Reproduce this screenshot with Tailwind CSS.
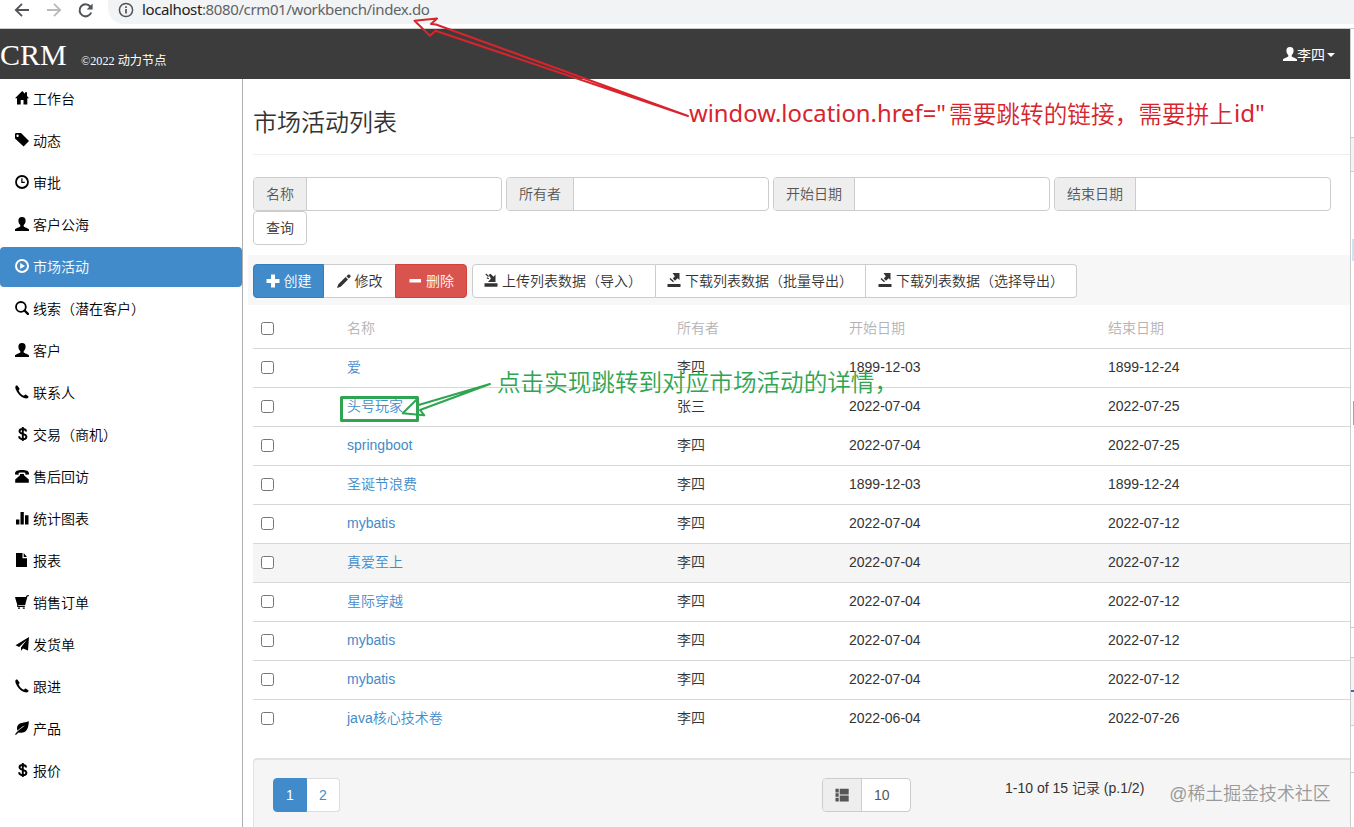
<!DOCTYPE html>
<html lang="zh-CN">
<head>
  <meta charset="UTF-8" />
  <meta name="viewport" content="width=device-width, initial-scale=1.0"/>
  <title>市场活动列表</title>
  <script src="https://cdn.jsdelivr.net/npm/@tailwindcss/browser@4"></script>
  <style>
    body {
      font-family: 'Liberation Sans', 'Noto Sans CJK SC', sans-serif;
    }
  </style>
</head>
<body class="relative w-[1354px] h-[827px] overflow-hidden bg-white text-sm text-[#333] flex flex-col">

  <!-- Icons -->
  <svg class="hidden">
    <symbol id="home" viewBox="0 0 14 14"><path d="M7.200 0 0 7.200h2V13.500h3.700V9h2.800v4.500H12.300V7.200h1.700L12 5V1.300H10v1.500z"/></symbol>
    <symbol id="tag" viewBox="0 0 14 14"><path fill-rule="evenodd" d="M0 .8.8 0H6l8 7.900L8.600 13.400 0 5.400zM2.600 1.500a1.200 1.200 0 1 0 0 2.400 1.200 1.200 0 0 0 0-2.400z"/></symbol>
    <symbol id="time" viewBox="0 0 14 14"><circle cx="7" cy="7" r="6" fill="none" stroke="currentColor" stroke-width="1.800"/><path d="M6.300 3.200h1.200v3.600H9.800V8H6.300z"/></symbol>
    <symbol id="user" viewBox="0 0 14 14"><path d="M7 0C4.400 0 3.300 1.500 3.400 4c.1 2 .9 3.100 1.900 4.100v1.400C4.800 10.300.3 11.200 0 12.600V14h14v-1.400c-.3-1.400-4.800-2.300-5.300-3.100V8.100c1-1 1.800-2.100 1.900-4.100C10.700 1.500 9.600 0 7 0z"/></symbol>
    <symbol id="play" viewBox="0 0 14 14"><circle cx="7" cy="7" r="6" fill="none" stroke="currentColor" stroke-width="2"/><path d="M5.200 3.900 10 7l-4.800 3.100z"/></symbol>
    <symbol id="search" viewBox="0 0 14 14"><circle cx="5.900" cy="5.900" r="4.900" fill="none" stroke="currentColor" stroke-width="1.800"/><path d="m9.500 9.500 3.400 3.400" stroke="currentColor" stroke-width="2.300" stroke-linecap="round"/></symbol>
    <symbol id="phone" viewBox="0 0 14 14"><path d="M1.300.6C.2 1.200 0 2.600.8 4.500 2.400 8.300 5.500 11.600 9 13.100c2 .8 3.500.6 4.300-.5l.3-1-2.800-2-1 .2-.8 1c-2.500-1.200-4.300-3-5.400-5.400l.8-.9.1-1L2.300.4z"/></symbol>
    <symbol id="usd" viewBox="0 0 14 14"><path fill="none" stroke="currentColor" stroke-width="1.900" d="M11.200 4.500C11 2.800 9.700 2 7.800 2 6 2 4.500 2.800 4.500 4.300c0 3.300 6.900 2 6.900 5.400 0 1.600-1.600 2.500-3.600 2.500-2.200 0-3.600-1-3.700-2.900M7.800 0v14"/></symbol>
    <symbol id="desk" viewBox="0 0 14 14"><path d="M0 4.800C0 1.900 2.600 1 7 1s7 .9 7 3.800V5.500l-3.600.3V3.900C9.400 3.400 4.600 3.400 3.600 3.900v1.900L0 5.500zM5 5h4v1.300l4.800 4.300V13.800H.2v-3.200L5 6.300z"/></symbol>
    <symbol id="stats" viewBox="0 0 14 14"><path d="M1 8.500h3.400v5H1zM5.500 1h3.300v12.500H5.500zM10 4.300h3.500v9.200H10z"/></symbol>
    <symbol id="file" viewBox="0 0 14 14"><path d="M1 0h6.500v5.200H12V14H1zM8.700 0 12 4H8.700z"/></symbol>
    <symbol id="cart" viewBox="0 0 14 14"><path d="M.2 2h10.700L11.700.3h2.300v1h-1.500l-2.400 8.900H3.200v.8h6.600v1H2.200V9.600L.2 3zM3 12.400h2v1.300H3zM7.800 12.400h2v1.300h-2z"/></symbol>
    <symbol id="send" viewBox="0 0 14 14"><path d="M14 0 .5 8.300l3.600 1.600L11.600 3 6 10.500v3.200l2-2.100 5 1.900z"/></symbol>
    <symbol id="leaf" viewBox="0 0 14 14"><path d="M13.900.2C9 2.200 4 .8 2.300 5.600c-.5 1.500-.3 2.700.1 3.900 2.300-1.500 4-3.600 7.500-4.900C7.500 6.800 4.500 8.300 2.300 10.600L0 13.300l.9.600 2.600-2.500c3 1 6.800.5 8.500-2.800C13.400 6 13.600 3 13.900.2z"/></symbol>
    <symbol id="plus" viewBox="0 0 14 14"><path d="M5 .5h4V5h4.500v4H9v4.500H5V9H.5V5H5z"/></symbol>
    <symbol id="minus" viewBox="0 0 14 14"><path d="M1.500 5h11.500v3.500H1.500z"/></symbol>
    <symbol id="pencil" viewBox="0 0 14 14"><path d="M0 14 1.300 10.300 8.600 3l2.400 2.400-7.300 7.300zM9.400 2.200 11.300.4h1l1.300 1.300v1l-1.800 1.900z"/></symbol>
    <symbol id="import" viewBox="0 0 14 14"><path d="M.5 10.300h13V13.800H.5zM4 9h7.500V1.500L9.600 3.700 6.400.8 4.600 2 7 5.600z"/><path d="m1.800 1 2.700 2.500M2.800 4.700l2 1" stroke="currentColor" stroke-width="1.200"/></symbol>
    <symbol id="export" viewBox="0 0 14 14"><path d="M.5 11h13v3H.5zM5.500 0h7V7L10.600 5.200 8 7.800 5.800 5.600 7.800 3.200z"/><path d="m3 5.500 3.500 3.200" stroke="currentColor" stroke-width="1.500"/></symbol>
    <symbol id="thlist" viewBox="0 0 14 14"><path d="M.5.800h3.200v3.600H.5zM4.700.8h9v5.700h-9zM.5 5.200h3.200v3.600H.5zM4.700 7.500h9v6h-9zM.5 9.700h3.200v3.800H.5z"/></symbol>
  </svg>

  <!-- Barra do navegador -->
  <div class="h-[28px] shrink-0 flex items-start bg-white font-['Noto_Sans']">
    <div class="w-[108px] h-[22px] flex items-center pl-[14px] text-[#5f6368]">
      <svg class="w-4 h-4 mr-4" viewBox="0 0 16 16" fill="none" stroke="#505357" stroke-width="1.8"><path d="M15 7H2M8 .8 1.800 7 8 13.200"/></svg>
      <svg class="w-4 h-4 mr-4" viewBox="0 0 16 16" fill="none" stroke="#b8babd" stroke-width="1.8"><path d="M1 7h13M8 .8 14.200 7 8 13.200"/></svg>
      <svg class="w-4 h-4" viewBox="0 0 16 16"><path d="M13.200 9.500A6 6 0 1 1 12.200 3.500" fill="none" stroke="#505357" stroke-width="2"/><path d="M14.600.5v6H8.700z" fill="#505357"/></svg>
    </div>
    <div class="flex-1 h-6 rounded-bl-2xl bg-[#f1f3f4] flex pl-[10px]">
      <svg class="w-4 h-4 mt-[2px] mr-[8px]" viewBox="0 0 16 16" fill="none" stroke="#505357" stroke-width="1.500"><circle cx="8" cy="8" r="6.600"/><path d="M8 7v4.500M8 4.200v1.700" stroke-width="1.700"/></svg>
      <div class="text-[15px] tracking-[-0.38px] leading-[19px] text-[#5f6368] whitespace-nowrap"><span class="text-[#202124]">localhost</span>:8080/crm01/workbench/index.do</div>
    </div>
  </div>

  <div class="flex-1 min-h-0 flex">
    <div class="w-[1350px] flex flex-col border-t border-[#ccc]">

      <!-- Topo -->
      <header class="h-[50px] shrink-0 bg-[#3c3c3c] text-white flex items-center justify-between pr-[15px]">
        <div class="flex items-baseline pt-[2px] font-['Liberation_Serif','Noto_Sans_CJK_SC',serif] whitespace-nowrap">
          <span class="text-[30px] leading-[50px] w-[81px]">CRM</span>
          <span class="text-[12.2px]">©2022 动力节点</span>
        </div>
        <div class="flex items-center pt-[2px]">
          <svg class="w-[14px] h-[14px] fill-current -mt-[3px]"><use href="#user"/></svg>
          <span>李四</span>
          <span class="ml-[2px] border-x-4 border-t-4 border-x-transparent border-t-white"></span>
        </div>
      </header>

      <div class="flex-1 min-h-0 flex">
        <!-- Menu lateral -->
        <nav id="menu" class="w-[243px] shrink-0 border-r border-[#b0b0b0] flex flex-col gap-[2px] text-black font-[350]"></nav>

        <main class="flex-1 min-w-0 pl-[5px] flex flex-col font-[350]">
          <div class="ml-[5px] h-[76px] border-b border-[#eee] pt-[31px]">
            <h3 class="text-2xl leading-[26px] font-[350]">市场活动列表</h3>
          </div>

          <!-- Filtros -->
          <form class="ml-[5px] mt-[22px] flex flex-wrap gap-x-1 text-[#555]">
            <label class="flex h-[34px] w-[249px] rounded border border-[#ccc] overflow-hidden leading-8"><span class="w-[53px] text-center bg-[#eee] border-r border-[#ccc]">名称</span></label>
            <label class="flex h-[34px] w-[263px] rounded border border-[#ccc] overflow-hidden leading-8"><span class="w-[67px] text-center bg-[#eee] border-r border-[#ccc]">所有者</span></label>
            <label class="flex h-[34px] w-[277px] rounded border border-[#ccc] overflow-hidden leading-8"><span class="w-[81px] text-center bg-[#eee] border-r border-[#ccc]">开始日期</span></label>
            <label class="flex h-[34px] w-[277px] rounded border border-[#ccc] overflow-hidden leading-8"><span class="w-[81px] text-center bg-[#eee] border-r border-[#ccc]">结束日期</span></label>
            <button type="button" class="h-[34px] w-[54px] rounded border border-[#ccc] text-[#333]">查询</button>
          </form>

          <!-- Botões -->
          <div class="mt-[10px] h-[50px] shrink-0 bg-[#f7f7f7] flex items-center pl-[5px] pt-[2px] whitespace-nowrap">
            <button class="h-[34px] w-[71px] rounded-l bg-[#428bca] border border-[#357ebd] text-white flex items-center justify-center gap-1"><svg class="w-[14px] h-[14px] fill-current"><use href="#plus"/></svg>创建</button>
            <button class="h-[34px] w-[71px] bg-white border-y border-[#ccc] flex items-center justify-center gap-1"><svg class="w-[14px] h-[14px] fill-current"><use href="#pencil"/></svg>修改</button>
            <button class="h-[34px] w-[72px] rounded-r bg-[#d9534f] border border-[#d43f3a] text-white flex items-center justify-center gap-1"><svg class="w-[14px] h-[14px] fill-current"><use href="#minus"/></svg>删除</button>
            <button class="ml-[5px] h-[34px] w-[184px] rounded-l bg-white border border-[#ccc] flex items-center pl-[11px] gap-1"><svg class="w-[14px] h-[14px] fill-current -mt-[2px]"><use href="#import"/></svg>上传列表数据（导入）</button>
            <button class="h-[34px] w-[210px] bg-white border-y border-r border-[#ccc] flex items-center pl-[11px] gap-1"><svg class="w-[14px] h-[14px] fill-current -mt-[2px]"><use href="#export"/></svg>下载列表数据（批量导出）</button>
            <button class="h-[34px] w-[211px] rounded-r bg-white border-y border-r border-[#ccc] flex items-center pl-3 gap-1"><svg class="w-[14px] h-[14px] fill-current -mt-[2px]"><use href="#export"/></svg>下载列表数据（选择导出）</button>
          </div>

          <!-- Tabela -->
          <div id="tabela" class="ml-[5px] mt-[4px]">
            <div class="h-[39px] grid grid-cols-[86px_330px_172px_259px_1fr] items-center pl-2 pb-px text-[#b3b3b3]">
              <span class="w-[13px] h-[13px] rounded-[2.5px] border border-[#767676] bg-white"></span>
              <span>名称</span><span>所有者</span><span>开始日期</span><span>结束日期</span>
            </div>
          </div>

          <!-- Paginação -->
          <div class="ml-[5px] mt-[20px] flex-1 rounded-tl border-t-2 border-l border-[#e2e2e2] bg-[#f5f5f5] pl-[19px] pt-[18px] flex items-start">
            <div class="flex h-[34px] leading-8 text-center text-[#428bca]">
              <span class="w-[34px] rounded-l bg-[#428bca] border border-[#428bca] text-white">1</span>
              <span class="w-[33px] rounded-r bg-white border border-l-0 border-[#ddd]">2</span>
            </div>
            <div class="ml-[482px] w-[89px] h-[34px] rounded border border-[#ccc] bg-white flex overflow-hidden leading-8 text-[#555]">
              <span class="w-[39px] bg-[#eee] border-r border-[#ccc] flex items-center justify-center"><svg class="w-[14px] h-[14px] fill-current"><use href="#thlist"/></svg></span>
              <span class="pl-3">10</span>
            </div>
            <div class="ml-[94px] leading-5">1-10 of 15 记录 (p.1/2)</div>
            <div class="ml-[25px] mt-[3px] text-[17.9px] leading-[26px] text-[#999] whitespace-nowrap">@稀土掘金技术社区</div>
          </div>
        </main>
      </div>
    </div>

    <!-- Borda direita da janela -->
    <div class="w-1 border-l border-t border-[#ccc] flex flex-col">
      <div class="mt-[108px] h-[35px] border-y border-[#ccc] bg-[#f1f3f4]"></div>
      <div class="mt-[67px] ml-px h-[22px] bg-[#cfe3f8]"></div>
      <div class="mt-[140px] ml-[2px] h-[24px] bg-[#d48a98]"></div>
      <div class="mt-[202px] h-[30px] border-t border-[#ccc]"></div>
      <div class="h-[69px] border-y border-[#ccc] bg-[#f3f5f9] pt-[32px]"><div class="h-[2px] bg-[#4067b5]"></div></div>
      <div class="h-[47px] border-b border-[#ccc]"></div>
    </div>
  </div>

  <!-- Anotações -->
  <svg class="absolute inset-0 w-[1354px] h-[827px] font-['Noto_Sans','Noto_Sans_CJK_SC',sans-serif] text-[23.6px]" fill="none" stroke-linejoin="round">
    <path d="M688 116 436 24.500l-5-.500 6-5.500L414.500 20.700l15.500 15 5.500-5z" stroke="#d8242c" stroke-width="2"/>
    <path d="M490 384 418.500 405l-.8-6.500-15 14.800 21.600 2-4.300-5.300z" stroke="#2fa552" stroke-width="2"/>
    <path d="M341.500 397.500h76v23h-76z" stroke="#2fa552" stroke-width="3"/>
    <g fill="#d8242c">
      <text x="689" y="122" textLength="257" lengthAdjust="spacingAndGlyphs">window.location.href="</text>
      <text x="949" y="123" textLength="284" class="font-[350]">需要跳转的链接，需要拼上</text>
      <text x="1234" y="122" textLength="31" lengthAdjust="spacingAndGlyphs">id"</text>
    </g>
    <text x="497" y="391" textLength="401" fill="#2fa552" class="font-[350]">点击实现跳转到对应市场活动的详情，</text>
  </svg>

  <script>
    const menu = [
      ["home", "工作台"], ["tag", "动态"], ["time", "审批"], ["user", "客户公海"],
      ["play", "市场活动"], ["search", "线索（潜在客户）"], ["user", "客户"], ["phone", "联系人"],
      ["usd", "交易（商机）"], ["desk", "售后回访"], ["stats", "统计图表"], ["file", "报表"],
      ["cart", "销售订单"], ["send", "发货单"], ["phone", "跟进"], ["leaf", "产品"], ["usd", "报价"]
    ];
    document.getElementById("menu").innerHTML = menu.map(([icon, texto], i) => `
      <a class="h-10 shrink-0 flex items-center pl-[15px] gap-1 whitespace-nowrap ${i === 4 ? "rounded bg-[#428bca] text-white" : ""}">
        <svg class="w-[14px] h-[14px] fill-current -mt-[2px]"><use href="#${icon}"/></svg>${texto}
      </a>`).join("");

    const linhas = [
      ["爱", "李四", "1899-12-03", "1899-12-24"],
      ["头号玩家", "张三", "2022-07-04", "2022-07-25"],
      ["springboot", "李四", "2022-07-04", "2022-07-25"],
      ["圣诞节浪费", "李四", "1899-12-03", "1899-12-24"],
      ["mybatis", "李四", "2022-07-04", "2022-07-12"],
      ["真爱至上", "李四", "2022-07-04", "2022-07-12"],
      ["星际穿越", "李四", "2022-07-04", "2022-07-12"],
      ["mybatis", "李四", "2022-07-04", "2022-07-12"],
      ["mybatis", "李四", "2022-07-04", "2022-07-12"],
      ["java核心技术卷", "李四", "2022-06-04", "2022-07-26"]
    ];
    document.getElementById("tabela").innerHTML += linhas.map((l, i) => `
      <div class="h-[39px] grid grid-cols-[86px_330px_172px_259px_1fr] items-center pl-2 pb-[2px] border-t border-[#d8d8d8] ${i === 5 ? "bg-[#f5f5f5]" : ""}">
        <span class="w-[13px] h-[13px] rounded-[2.5px] border border-[#767676] bg-white"></span>
        <a class="text-[#428bca]">${l[0]}</a><span>${l[1]}</span><span>${l[2]}</span><span>${l[3]}</span>
      </div>`).join("");
  </script>
</body>
</html>
